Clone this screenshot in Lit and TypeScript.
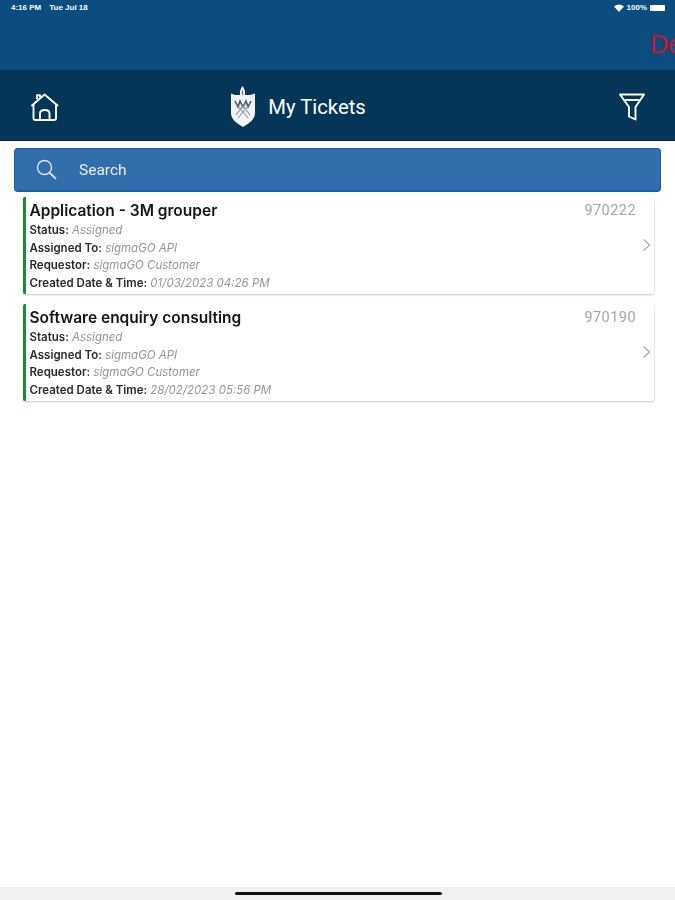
import { LitElement, html, css, svg } from "lit";
import { customElement } from "lit/decorators.js";

interface Ticket {
  title: string;
  id: string;
  status: string;
  assigned: string;
  requestor: string;
  created: string;
}

const TICKETS: Ticket[] = [
  { title: "Application - 3M grouper", id: "970222", status: "Assigned", assigned: "sigmaGO API", requestor: "sigmaGO Customer", created: "01/03/2023 04:26 PM" },
  { title: "Software enquiry consulting", id: "970190", status: "Assigned", assigned: "sigmaGO API", requestor: "sigmaGO Customer", created: "28/02/2023 05:56 PM" },
];

const homeIcon = svg`<svg width="30" height="30" viewBox="0 0 30 30" fill="none" stroke="#fff" stroke-width="1.9" stroke-linejoin="round" stroke-linecap="round">
  <path d="M2 13.5 L14.5 2.5 L27.5 13.5"/>
  <path d="M7 6.5 V3.2 H10 V4.5"/>
  <path d="M3.5 13 V26 Q3.5 28 5.5 28 H24 Q26 28 26 26 V13"/>
  <path d="M10 27.5 V21.5 Q10 18 14.8 18 Q19.5 18 19.5 21.5 V27.5"/>
</svg>`;

const filterIcon = svg`<svg width="28" height="30" viewBox="0 0 28 30" fill="none" stroke="#fff" stroke-width="1.9" stroke-linejoin="round">
  <path d="M2 2.5 H26 L17.5 15 V27.5 L11 24.5 V15 Z"/>
  <path d="M5.5 8 H22.5"/>
</svg>`;

const crest = svg`<svg width="26" height="41" viewBox="0 0 26 41">
  <path d="M12.5 0 C14.5 3 15.5 5 15 9 L20 9 L25 7.5 V27 C25 34 18 38 13 41 C8 38 1 34 1 27 V7.5 L5 9 L10 9 C9.5 5 10.5 3 12.5 0 Z" fill="#f2f4f6"/>
  <path d="M12.5 4 C13.5 6 13.5 7.5 12.5 10 C11.5 7.5 11.5 6 12.5 4 Z" fill="#5f7183"/>
  <path d="M5 15 L8 21 L10 15 L13 21 L16 15 L18 21 L21 15" fill="none" stroke="#46535f" stroke-width="1.5"/>
  <path d="M6 29 L13 20 L20 29 M8 20 L18 32 M18 20 L8 32" fill="none" stroke="#8a96a0" stroke-width="1.1"/>
</svg>`;

@customElement("app-root")
export class AppRoot extends LitElement {
  static styles = css`
    :host {
      display: block;
      width: 675px;
      height: 900px;
      position: relative;
      overflow: hidden;
      background: #fff;
      font-family: Inter, "Liberation Sans", sans-serif;
      color: #111;
    }
    .page { display: flex; flex-direction: column; height: 900px; filter: blur(0.45px); }
    .top { height: 70px; background: #0b4d7e; overflow: hidden; flex: none; display: flex; flex-direction: column; }
    .status {
      height: 14px; padding: 1px 10px 0 11px; box-sizing: border-box; display: flex; align-items: center; justify-content: space-between;
      color: #fff; font-size: 8px; font-weight: 600; font-family: "Liberation Sans", sans-serif;
    }
    .status .left { display: flex; gap: 8px; }
    .status .right { display: flex; align-items: center; gap: 3px; }
    .batt { width: 15px; height: 6px; background: #fff; border-radius: 1px; }
    .de { margin: 15px 0 0 650px; font-size: 25px; line-height: 30px; color: #d0112e; white-space: nowrap; font-family: "Liberation Sans", sans-serif; }
    .nav {
      height: 71px; background: #053658; flex: none; display: grid; grid-template-columns: 1fr auto 1fr;
      align-items: center; padding: 3px 29px 0 30px; border-bottom: 1px solid #0a2236; box-sizing: border-box;
    }
    .nav .r { justify-self: end; display: flex; }
    .nav .l { display: flex; }
    .title { display: flex; align-items: center; gap: 12px; color: #fff; font-size: 20.3px; font-weight: 400; font-family: Roboto, "Liberation Sans", sans-serif; margin-right: 80px; }
    .search {
      margin: 7px 14px 0; height: 44px; box-sizing: border-box; background: #336eac; border: 1px solid #1560a6;
      border-bottom-width: 2px; border-radius: 4px; display: flex; align-items: center; padding-left: 21px; gap: 21px;
      color: #e8eff6; font-size: 15.5px; font-family: Roboto, "Liberation Sans", sans-serif; flex: none;
    }
    .list { display: flex; flex-direction: column; gap: 10px; margin: 5px 21px 0 23px; }
    .card {
      height: 97px; box-sizing: border-box; background: #fff; border-left: 3px solid #1f8a3a; border-radius: 2px;
      box-shadow: 0 1px 2px rgba(0,0,0,.22), 1px 0 1px rgba(0,0,0,.05); padding: 3px 18px 0 3.5px; position: relative;
    }
    .head { display: flex; justify-content: space-between; align-items: baseline; }
    .name { font-size: 15.5px; font-weight: 600; line-height: 22px; color: #141414; font-family: Inter, "Liberation Sans", sans-serif; }
    .id { font-size: 14.5px; color: #a6a6a6; font-family: Roboto, "Liberation Sans", sans-serif; letter-spacing: .45px; position: relative; top: -1px; }
    .row { font-size: 11.5px; line-height: 17.5px; white-space: nowrap; font-family: Inter, "Liberation Sans", sans-serif; }
    .row b { font-weight: 600; color: #2a2a2a; }
    .row i { color: #959595; font-weight: 400; }
    .chev { position: absolute; right: 3px; top: 41px; }
    .home-bar-wrap { margin-top: auto; height: 13px; background: #f1f1f1; display: flex; justify-content: center; padding: 5px 0 0 2px; box-sizing: border-box; flex: none; }
    .home-bar { width: 207px; height: 3px; background: #111; border-radius: 2px; }
  `;

  private row(label: string, value: string) {
    return html`<div class="row"><b>${label}:</b> <i>${value}</i></div>`;
  }

  render() {
    return html`<div class="page">
      <div class="top">
        <div class="status">
          <div class="left"><span>4:16 PM</span><span>Tue Jul 18</span></div>
          <div class="right">
            <svg width="10" height="8" viewBox="0 0 10 8"><path d="M0 2.4 Q5 -1.6 10 2.4 L5 8 Z" fill="#fff"/></svg>
            <span>100%</span><span class="batt"></span>
          </div>
        </div>
        <div class="de">De</div>
      </div>
      <div class="nav">
        <div class="l">${homeIcon}</div>
        <div class="title">${crest}<span>My Tickets</span></div>
        <div class="r">${filterIcon}</div>
      </div>
      <div class="search">
        <svg width="22" height="22" viewBox="0 0 22 22" fill="none" stroke="#dfe8f2" stroke-width="1.4" stroke-linecap="round"><circle cx="8.5" cy="8.5" r="7"/><path d="M13.8 13.8 L19.4 19.4" stroke-width="1.8"/></svg>
        <span>Search</span>
      </div>
      <div class="list">
        ${TICKETS.map(
          (t) => html`<div class="card">
            <div class="head"><span class="name">${t.title}</span><span class="id">${t.id}</span></div>
            ${this.row("Status", t.status)}
            ${this.row("Assigned To", t.assigned)}
            ${this.row("Requestor", t.requestor)}
            ${this.row("Created Date & Time", t.created)}
            <svg class="chev" width="9" height="14" viewBox="0 0 9 14" fill="none" stroke="#a8a8a8" stroke-width="1.2"><path d="M1.5 1.5 L7.5 7 L1.5 12.5"/></svg>
          </div>`
        )}
      </div>
      <div class="home-bar-wrap"><div class="home-bar"></div></div>
    </div>`;
  }
}
